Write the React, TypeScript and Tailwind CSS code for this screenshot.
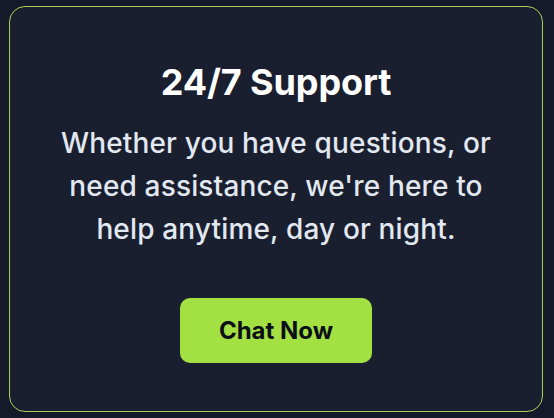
export default function App() {
  return (
    <div
      className="w-[554px] h-[418px] bg-[#141a2a] pt-[6px] pl-[9px]"
      style={{ fontFamily: "Inter, 'Noto Sans', sans-serif" }}
    >
      <div className="w-[534px] h-[406px] rounded-[16px] border border-[#a9cf54] bg-[#1a1f2f] flex flex-col items-center pt-[55px]">
        <h1 className="text-[36px] leading-[40px] font-bold text-white tracking-[-0.1px]">24/7 Support</h1>
        <p className="mt-[20px] text-[28px] leading-[43px] font-medium text-[#e2e8f0] text-center w-[470px] tracking-[0.15px]">
          Whether you have questions, or need assistance, we're here to help anytime, day or night.
        </p>
        <button className="mt-[47px] w-[192px] h-[65px] rounded-[10px] bg-[#a3e042] text-[24px] font-bold text-[#0b0f19]">
          Chat Now
        </button>
      </div>
    </div>
  );
}
